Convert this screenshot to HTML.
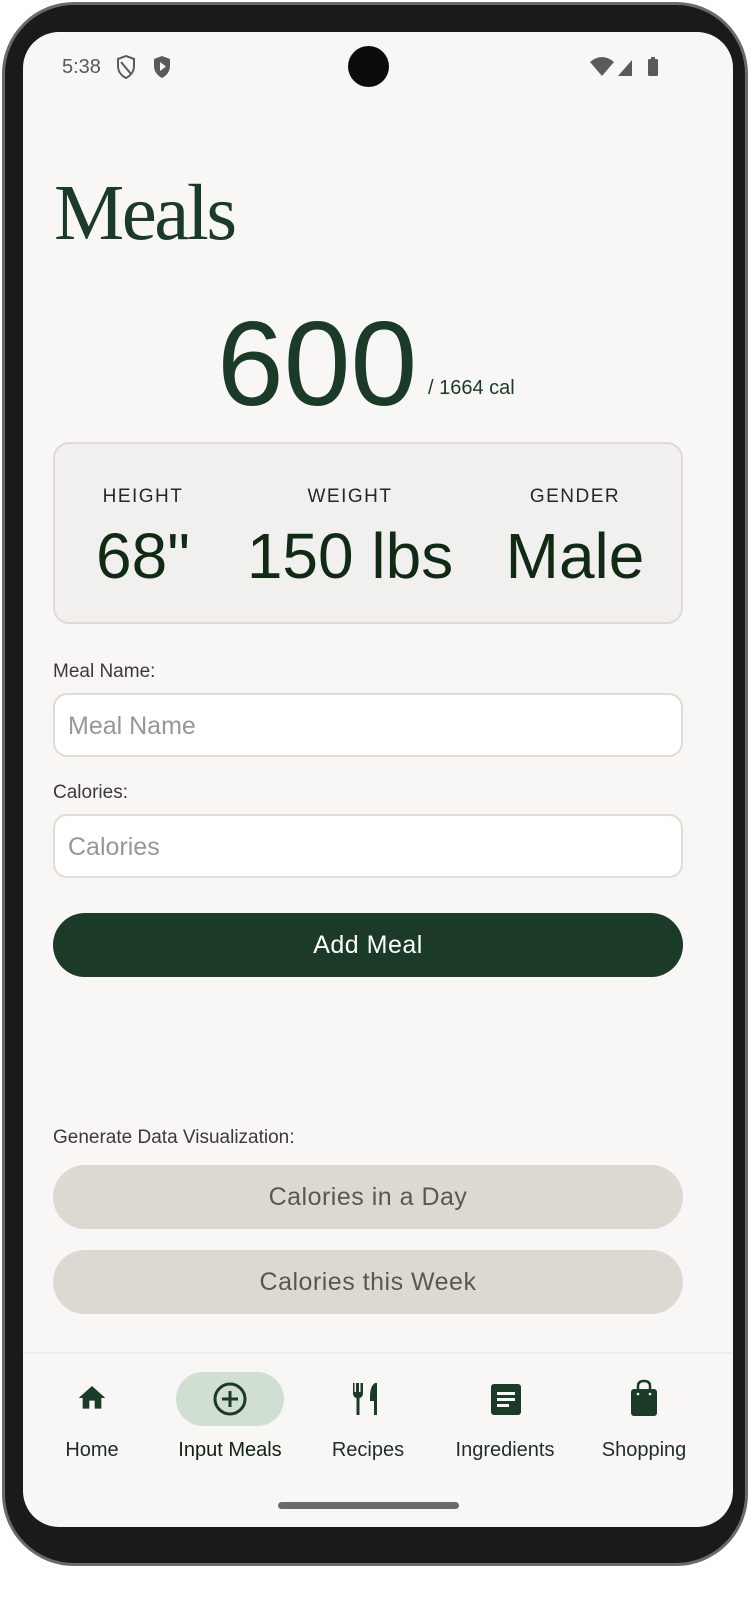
<!DOCTYPE html>
<html><head><meta charset="utf-8"><style>
*{margin:0;padding:0;box-sizing:border-box}
body{width:756px;height:1600px;background:#fff;position:relative;overflow:hidden;font-family:"Liberation Sans",sans-serif}
.phone{position:absolute;left:2px;top:2px;width:746px;height:1564px;border-radius:72px;background:#1a1a1a;border:3px solid #6a6a6a}
.screen{position:absolute;left:23px;top:32px;width:710px;height:1495px;border-radius:36px;background:#f8f7f5;overflow:hidden}
.abs{position:absolute}
.g{color:#1b3a28}
.lbl{font-size:19px;color:#3d3a36}
.inp{position:absolute;left:30px;width:630px;height:64px;border:2px solid #e0dcd4;border-radius:14px;background:#fff;font-size:25px;color:#9a9793;padding:17px 13px}
.pill{position:absolute;left:30px;width:630px;height:64px;border-radius:32px;text-align:center;line-height:64px;font-size:25px;letter-spacing:0.5px}
.nav{position:absolute;top:1407px;font-size:20px;color:#1f2f25;text-align:center;width:140px}
</style></head><body>
<div class="phone"></div>
<div class="screen">
  <div class="abs" style="left:39px;top:24px;font-size:20px;color:#5a5a5a">5:38</div>
  <svg class="abs" style="left:92px;top:22px" width="22" height="26" viewBox="0 0 22 26"><path d="M11 2L3 5v7c0 6 4 10 8 12 4-2 8-6 8-12V5z M6 8l10 12" fill="none" stroke="#5a5a5a" stroke-width="2"/></svg>
  <svg class="abs" style="left:128px;top:22px" width="22" height="26" viewBox="0 0 22 26"><path d="M11 2L3 5v7c0 6 4 10 8 12 4-2 8-6 8-12V5z" fill="#5a5a5a"/><path d="M9 8v9l6-4.5z" fill="#f8f7f5"/></svg>
  <div class="abs" style="left:325px;top:14px;width:41px;height:41px;border-radius:50%;background:#0c0c0c"></div>
  <svg class="abs" style="left:567px;top:24px" width="80" height="22" viewBox="0 0 80 22"><path d="M0 6Q12 -4 24 6L12 20z" fill="#5a5a5a"/><path d="M28 20L42 4V20z" fill="#5a5a5a"/><rect x="58" y="3" width="10" height="17" rx="1.5" fill="#5a5a5a"/><rect x="61" y="1" width="4" height="3" fill="#5a5a5a"/></svg>

  <div class="abs g" style="left:31px;top:137px;font-family:'Liberation Serif',serif;font-size:79px;letter-spacing:-2.5px">Meals</div>
  <div class="abs g" style="left:194px;top:262px;font-size:120px;line-height:140px">600</div>
  <div class="abs g" style="left:405px;top:345px;font-size:20px">/ 1664 cal</div>

  <div class="abs" style="left:30px;top:410px;width:630px;height:182px;background:#f1f0ee;border:2px solid #dedbd6;border-radius:16px"></div>
  <div class="abs" style="left:60px;top:454px;width:120px;text-align:center;font-size:19px;letter-spacing:1.5px;color:#1f2a22">HEIGHT</div>
  <div class="abs" style="left:227px;top:454px;width:200px;text-align:center;font-size:19px;letter-spacing:1.5px;color:#1f2a22">WEIGHT</div>
  <div class="abs" style="left:487px;top:454px;width:130px;text-align:center;font-size:19px;letter-spacing:1.5px;color:#1f2a22">GENDER</div>
  <div class="abs" style="left:40px;top:487px;width:160px;text-align:center;font-size:64px;color:#102a14">68"</div>
  <div class="abs" style="left:207px;top:487px;width:240px;text-align:center;font-size:64px;color:#102a14">150 lbs</div>
  <div class="abs" style="left:467px;top:487px;width:170px;text-align:center;font-size:64px;color:#102a14">Male</div>

  <div class="abs lbl" style="left:30px;top:629px">Meal Name:</div>
  <div class="inp" style="top:661px">Meal Name</div>
  <div class="abs lbl" style="left:30px;top:750px">Calories:</div>
  <div class="inp" style="top:782px">Calories</div>
  <div class="pill" style="top:881px;background:#1b3a28;color:#fff">Add Meal</div>

  <div class="abs lbl" style="left:30px;top:1095px">Generate Data Visualization:</div>
  <div class="pill" style="top:1133px;background:#ddd9d2;color:#5b5750">Calories in a Day</div>
  <div class="pill" style="top:1218px;background:#ddd9d2;color:#5b5750">Calories this Week</div>

  <div class="abs" style="left:0;top:1320px;width:710px;height:2px;background:#eeece9"></div>
  <svg class="abs" style="left:53px;top:1350px" width="32" height="32" viewBox="0 0 24 24"><path d="M10 20v-6h4v6h5v-8h3L12 3 2 12h3v8z" fill="#1b3a28"/></svg>
  <div class="abs" style="left:153px;top:1340px;width:108px;height:54px;border-radius:27px;background:#d1dfd3"></div>
  <svg class="abs" style="left:189px;top:1349px" width="36" height="36" viewBox="0 0 36 36"><circle cx="18" cy="18" r="15" fill="none" stroke="#1b3a28" stroke-width="3"/><path d="M18 10v16M10 18h16" stroke="#1b3a28" stroke-width="3"/></svg>
  <svg class="abs" style="left:326px;top:1349px" width="36" height="36" viewBox="0 0 36 36"><path d="M4 2v10q0 4 3.5 5V34h3V17q3.5-1 3.5-5V2h-2.5v9h-1.5V2h-3v9h-1.5V2z" fill="#1b3a28"/><path d="M26 2q-5 3-5 14v4h4v14h3V2z" fill="#1b3a28"/></svg>
  <svg class="abs" style="left:466px;top:1350px" width="34" height="34" viewBox="0 0 34 34"><rect x="2" y="2" width="30" height="31" rx="3" fill="#1b3a28"/><rect x="8" y="10" width="18" height="3" fill="#f8f7f5"/><rect x="8" y="16" width="18" height="3" fill="#f8f7f5"/><rect x="8" y="22" width="12" height="3" fill="#f8f7f5"/></svg>
  <svg class="abs" style="left:606px;top:1347px" width="30" height="38" viewBox="0 0 30 38"><rect x="2" y="10" width="26" height="27" rx="3" fill="#1b3a28"/><path d="M9 14V7q0-5 6-5t6 5v7" fill="none" stroke="#1b3a28" stroke-width="2.5"/><circle cx="9" cy="15" r="1.3" fill="#f8f7f5"/><circle cx="21" cy="15" r="1.3" fill="#f8f7f5"/></svg>
  <div class="nav" style="left:-1px">Home</div>
  <div class="nav" style="left:137px;color:#10200f">Input Meals</div>
  <div class="nav" style="left:275px">Recipes</div>
  <div class="nav" style="left:412px">Ingredients</div>
  <div class="nav" style="left:551px">Shopping</div>
  <div class="abs" style="left:255px;top:1470px;width:181px;height:7px;border-radius:4px;background:#6a6a6a"></div>
</div>
</body></html>
